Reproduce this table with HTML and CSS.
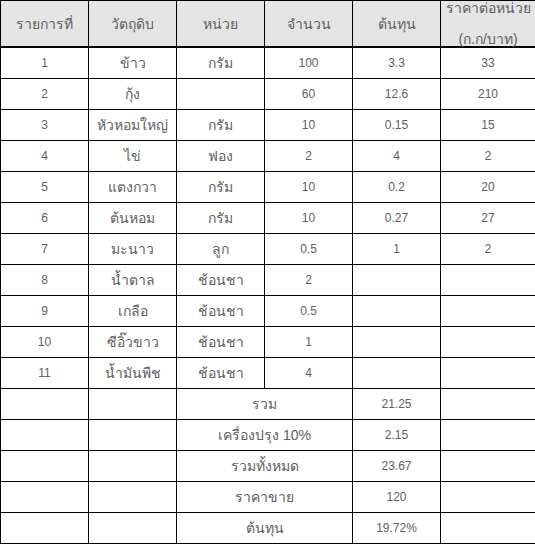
FILE: index.html
```html
<!DOCTYPE html>
<html lang="th">
<head>
<meta charset="utf-8">
<link rel="stylesheet" href="styles.css">
</head>
<body>
<table class="cost">
  <colgroup>
    <col class="c1"><col class="c2"><col class="c3"><col class="c4"><col class="c5"><col class="c6">
  </colgroup>
  <thead>
    <tr>
      <th>รายการที่</th>
      <th>วัตถุดิบ</th>
      <th>หน่วย</th>
      <th>จำนวน</th>
      <th>ต้นทุน</th>
      <th class="two"><span class="l1">ราคาต่อหน่วย</span><span class="l2">(ก.ก/บาท)</span></th>
    </tr>
  </thead>
  <tbody>
    <tr><td>1</td><td class="t">ข้าว</td><td class="t">กรัม</td><td>100</td><td>3.3</td><td>33</td></tr>
    <tr><td>2</td><td class="t">กุ้ง</td><td></td><td>60</td><td>12.6</td><td>210</td></tr>
    <tr><td>3</td><td class="t">หัวหอมใหญ่</td><td class="t">กรัม</td><td>10</td><td>0.15</td><td>15</td></tr>
    <tr><td>4</td><td class="t">ไข่</td><td class="t">ฟอง</td><td>2</td><td>4</td><td>2</td></tr>
    <tr><td>5</td><td class="t">แตงกวา</td><td class="t">กรัม</td><td>10</td><td>0.2</td><td>20</td></tr>
    <tr><td>6</td><td class="t">ต้นหอม</td><td class="t">กรัม</td><td>10</td><td>0.27</td><td>27</td></tr>
    <tr><td>7</td><td class="t">มะนาว</td><td class="t">ลูก</td><td>0.5</td><td>1</td><td>2</td></tr>
    <tr><td>8</td><td class="t">น้ำตาล</td><td class="t">ช้อนชา</td><td>2</td><td></td><td></td></tr>
    <tr><td>9</td><td class="t">เกลือ</td><td class="t">ช้อนชา</td><td>0.5</td><td></td><td></td></tr>
    <tr><td>10</td><td class="t">ซีอิ๊วขาว</td><td class="t">ช้อนชา</td><td>1</td><td></td><td></td></tr>
    <tr><td>11</td><td class="t">น้ำมันพืช</td><td class="t">ช้อนชา</td><td>4</td><td></td><td></td></tr>
    <tr><td></td><td></td><td class="t" colspan="2">รวม</td><td>21.25</td><td></td></tr>
    <tr><td></td><td></td><td class="t" colspan="2">เครื่องปรุง 10%</td><td>2.15</td><td></td></tr>
    <tr><td></td><td></td><td class="t" colspan="2">รวมทั้งหมด</td><td>23.67</td><td></td></tr>
    <tr><td></td><td></td><td class="t" colspan="2">ราคาขาย</td><td>120</td><td></td></tr>
    <tr><td></td><td></td><td class="t" colspan="2">ต้นทุน</td><td>19.72%</td><td></td></tr>
  </tbody>
</table>
</body>
</html>
```

FILE: styles.css
```css
html, body {
  margin: 0;
  padding: 0;
  background: #ffffff;
}

.cost {
  border-collapse: collapse;
  table-layout: fixed;
  width: 535px;
  font-family: "Liberation Sans", sans-serif;
  font-size: 12px;
  line-height: 16px;
  color: #606060;
}

.c1, .c2, .c3, .c4, .c5 { width: 88px; }
.c6 { width: 95px; }

.cost th,
.cost td {
  border: 1px solid #000;
  text-align: center;
  vertical-align: middle;
  padding: 0;
  font-weight: 400;
}

.cost thead th {
  background: #e4e4e4;
  height: 45px;
  border-bottom: 2px solid #000;
  font-size: 14px;
  line-height: 16px;
}

.cost thead th.two {
  vertical-align: top;
}

.l1,
.l2 {
  display: block;
  line-height: 16px;
}

.l1 {
  margin-top: -1px;
}

.l2 {
  margin-top: 15px;
  margin-bottom: -1px;
}

.cost tbody td {
  height: 30px;
}

.cost tbody td.t {
  font-size: 14px;
  line-height: 16px;
}
```
